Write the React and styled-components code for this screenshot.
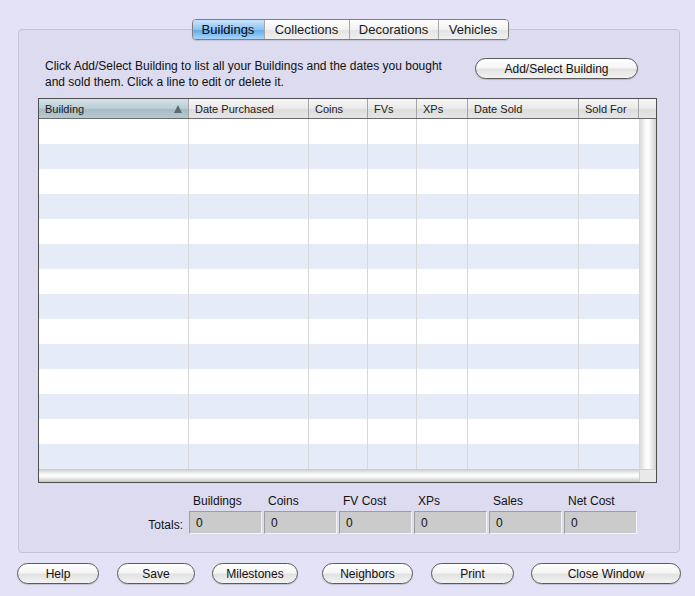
import React from "react";
import styled, { createGlobalStyle, css } from "styled-components";

const GlobalStyle = createGlobalStyle`
  html, body {
    margin: 0;
    padding: 0;
    background: #e3e2f7;
  }
  body {
    font-family: "Liberation Sans", Arial, sans-serif;
    color: #111;
  }
`;

const Window = styled.div`
  width: 695px;
  height: 596px;
  padding-top: 29px;
  box-sizing: border-box;
  background: #e3e2f7;
`;

const Panel = styled.div`
  margin-left: 18px;
  width: 662px;
  height: 524px;
  box-sizing: border-box;
  background: #dcdbef;
  border: 1px solid #c4c3d6;
  border-radius: 4px;
  display: flex;
  flex-direction: column;
`;

const TabBar = styled.div`
  display: flex;
  align-self: center;
  margin-top: -11px;
  margin-left: 2px;
  height: 19px;
  border: 1px solid #7e7e7e;
  border-radius: 4px;
  overflow: hidden;
  box-shadow: 0 1px 1px rgba(0, 0, 0, 0.12);
`;

const Tab = styled.div`
  width: ${(p) => p.$w}px;
  display: flex;
  align-items: center;
  justify-content: center;
  font-size: 13px;
  color: #1a1a1a;
  background: linear-gradient(#ffffff, #f2f2f2 50%, #e4e4e4 51%, #f0f0f0);
  & + & {
    border-left: 1px solid #a8a8a8;
  }
  ${(p) =>
    p.$active &&
    css`
      background: linear-gradient(#c9e3fb, #8fc3f2 50%, #5fa8ec 51%, #a6d4fb);
      color: #0a0a0a;
    `}
`;

const Intro = styled.div`
  display: flex;
  align-items: flex-start;
  padding: 18px 0 0 26px;
  height: 55px;
  box-sizing: border-box;
`;

const IntroText = styled.p`
  margin: 0;
  width: 420px;
  font-size: 12px;
  line-height: 16px;
`;

const PillButton = styled.button`
  width: ${(p) => p.$w}px;
  height: 21px;
  padding: 0;
  border: 1px solid #5a5a5a;
  border-radius: 11px;
  background: linear-gradient(#ffffff, #f6f6f6 45%, #e2e2e2 55%, #f3f3f3);
  font-family: "Liberation Sans", Arial, sans-serif;
  font-size: 12px;
  color: #111;
  box-shadow: 0 1px 1px rgba(0, 0, 0, 0.15);
`;

const AddButton = styled(PillButton)`
  margin-left: 10px;
`;

const Table = styled.div`
  margin: 3px 0 0 19px;
  width: 619px;
  height: 385px;
  box-sizing: border-box;
  border: 1px solid #4e4e4e;
  display: flex;
  flex-direction: column;
  background: #fff;
`;

const cols = [150, 120, 59, 49, 51, 111, 60, 17];

const HeaderRow = styled.div`
  display: grid;
  grid-template-columns: ${cols.map((c) => c + "px").join(" ")};
  height: 19px;
  border-bottom: 1px solid #6a6a6a;
`;

const HeaderCell = styled.div`
  display: flex;
  align-items: center;
  justify-content: space-between;
  padding: 0 6px 0 6px;
  font-size: 11px;
  color: #1a1a1a;
  background: linear-gradient(#f7f7f7, #e9e9e9 50%, #dcdcdc 51%, #e6e6e6);
  border-right: 1px solid #a4a4a4;
  &:last-child {
    border-right: none;
  }
  ${(p) =>
    p.$sorted &&
    css`
      background: linear-gradient(#d6e2e8, #b9ccd4 50%, #a4bac3 51%, #b7c9d1);
    `}
`;

const SortArrow = styled.span`
  width: 0;
  height: 0;
  border-left: 4px solid transparent;
  border-right: 4px solid transparent;
  border-bottom: 8px solid #5d6a70;
`;

const Body = styled.div`
  display: flex;
  height: 350px;
`;

const Rows = styled.div`
  width: 600px;
  display: flex;
  flex-direction: column;
`;

const Row = styled.div`
  display: grid;
  grid-template-columns: ${cols.slice(0, 7).map((c) => c + "px").join(" ")};
  height: 25px;
  background: ${(p) => (p.$alt ? "#e6ecf7" : "#ffffff")};
`;

const Cell = styled.div`
  border-right: 1px solid #d8d8d8;
  &:last-child {
    border-right: none;
  }
`;

const VScroll = styled.div`
  width: 17px;
  background: linear-gradient(to right, #d4d4d4, #fbfbfb 40%, #ffffff 55%, #d0d0d0);
`;

const HScrollRow = styled.div`
  display: flex;
  flex: 1;
`;

const HScroll = styled.div`
  width: 600px;
  background: linear-gradient(#c9c9c9, #f4f4f4 35%, #ffffff 55%, #c4c4c4);
`;

const Corner = styled.div`
  flex: 1;
  background: #e9e9e9;
  border-left: 1px solid #cfcfcf;
  border-top: 1px solid #cfcfcf;
`;

const Totals = styled.div`
  display: grid;
  grid-template-columns: 48px repeat(6, 73px);
  column-gap: 2px;
  margin: 11px 0 0 120px;
  align-items: end;
`;

const TotalLabel = styled.div`
  font-size: 12px;
  height: 17px;
  padding-left: 4px;
`;

const TotalsCaption = styled.div`
  font-size: 12px;
  align-self: center;
  text-align: right;
  padding-right: 4px;
  padding-top: 4px;
`;

const TotalBox = styled.div`
  height: 23px;
  box-sizing: border-box;
  background: #cbcbcb;
  border: 1px solid #9d9d9d;
  border-right-color: #f4f4f4;
  border-bottom-color: #f4f4f4;
  font-size: 12px;
  display: flex;
  align-items: center;
  padding-left: 6px;
`;

const Footer = styled.div`
  display: flex;
  padding: 10px 0 0 17px;
`;

const FooterButton = styled(PillButton)`
  margin-right: ${(p) => p.$gap}px;
`;

const headers = ["Building", "Date Purchased", "Coins", "FVs", "XPs", "Date Sold", "Sold For", ""];
const totals = ["Buildings", "Coins", "FV Cost", "XPs", "Sales", "Net Cost"];
const footer = [
  ["Help", 82, 18],
  ["Save", 78, 17],
  ["Milestones", 86, 24],
  ["Neighbors", 91, 18],
  ["Print", 83, 17],
  ["Close Window", 150, 0],
];
const tabs = [
  ["Buildings", 71, true],
  ["Collections", 84],
  ["Decorations", 88],
  ["Vehicles", 69],
];

export default function App() {
  return (
    <>
      <GlobalStyle />
      <Window>
        <Panel>
          <TabBar>
            {tabs.map(([t, w, a]) => (
              <Tab key={t} $w={w} $active={a}>
                {t}
              </Tab>
            ))}
          </TabBar>
          <Intro>
            <IntroText>
              Click Add/Select Building to list all your Buildings and the dates you bought
              and sold them. Click a line to edit or delete it.
            </IntroText>
            <AddButton $w={163}>Add/Select Building</AddButton>
          </Intro>
          <Table>
            <HeaderRow>
              {headers.map((h, i) => (
                <HeaderCell key={i} $sorted={i === 0}>
                  {h}
                  {i === 0 && <SortArrow />}
                </HeaderCell>
              ))}
            </HeaderRow>
            <Body>
              <Rows>
                {Array.from({ length: 14 }).map((_, r) => (
                  <Row key={r} $alt={r % 2 === 1}>
                    {cols.slice(0, 7).map((_, c) => (
                      <Cell key={c} />
                    ))}
                  </Row>
                ))}
              </Rows>
              <VScroll />
            </Body>
            <HScrollRow>
              <HScroll />
              <Corner />
            </HScrollRow>
          </Table>
          <Totals>
            <div />
            {totals.map((t) => (
              <TotalLabel key={t}>{t}</TotalLabel>
            ))}
            <TotalsCaption>Totals:</TotalsCaption>
            {totals.map((t) => (
              <TotalBox key={t}>0</TotalBox>
            ))}
          </Totals>
        </Panel>
        <Footer>
          {footer.map(([t, w, g]) => (
            <FooterButton key={t} $w={w} $gap={g}>
              {t}
            </FooterButton>
          ))}
        </Footer>
      </Window>
    </>
  );
}
